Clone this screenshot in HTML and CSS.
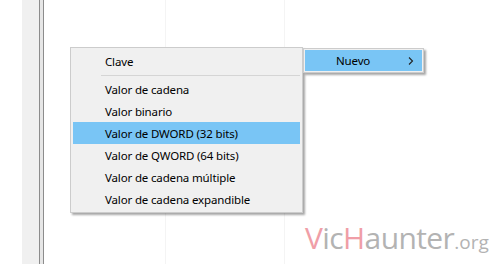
FILE: index.html
```html
<!DOCTYPE html>
<html>
  <head>
    <title>Nuevo valor</title>
    <link rel="stylesheet" href="styles.css">
  </head>
  <body>
    <div class="window">
      <div class="edge"></div>
      <div class="tree"></div>
      <div class="splitter"></div>
      <div class="list">
        <div class="col col-name"></div>
        <div class="col col-type"></div>
        <div class="col col-data"></div>
      </div>

      <div class="menu">
        <div class="item">Clave</div>
        <div class="separator"></div>
        <div class="item">Valor de cadena</div>
        <div class="item">Valor binario</div>
        <div class="item active">Valor de DWORD (32 bits)</div>
        <div class="item">Valor de QWORD (64 bits)</div>
        <div class="item">Valor de cadena múltiple</div>
        <div class="item">Valor de cadena expandible</div>
      </div>

      <div class="menu parent">
        <div class="item active">
          <span>Nuevo</span>
          <svg class="chevron" width="6" height="8" viewBox="0 0 6 8">
            <path d="M1 0.5 L4.5 4 L1 7.5" fill="none" stroke="#222" stroke-width="1.1" />
          </svg>
        </div>
      </div>

      <div class="watermark">
        <span class="pink">V</span>ic<span class="pink">H</span>aunter<span class="tld">.org</span>
      </div>
    </div>
  </body>
</html>
```

FILE: styles.css
```css
body {
  margin: 0;
  font-family: "Noto Sans", "Open Sans", sans-serif;
}
.window {
  position: relative;
  width: 499px;
  height: 264px;
  overflow: hidden;
  display: flex;
  background: #ffffff;
}
.edge {
  width: 22px;
}
.tree {
  width: 17px;
  background: #f0f0f0;
}
.splitter {
  width: 3px;
  background: #e6e6e6;
  border-left: 1px solid #8c8c8c;
  border-right: 1px solid #8c8c8c;
}
.list {
  flex: 1;
  display: flex;
}
.col-name {
  width: 121px;
  border-right: 1px solid #f4f4f4;
}
.col-type {
  width: 118px;
  border-right: 1px solid #f4f4f4;
}
.col-data {
  flex: 1;
}

.menu {
  position: absolute;
  left: 70px;
  top: 47px;
  width: 227px;
  padding: 2px;
  background: #f0f0f0;
  border: 1px solid #cccccc;
  box-shadow: 2px 2px 2px rgba(0, 0, 0, 0.35);
  font-size: 11.5px;
  letter-spacing: -0.15px;
  color: #000000;
}
.item {
  height: 22px;
  line-height: 23px;
  padding-left: 32px;
  white-space: nowrap;
}
.item.active {
  background: #79c5f5;
}
.separator {
  height: 1px;
  margin: 3px 0 2px 28px;
  background: #d5d5d5;
}
.menu.parent {
  left: 303px;
  top: 48px;
  width: 117px;
  padding: 1px;
}
.parent .item {
  height: 21px;
  line-height: 22px;
  display: flex;
  align-items: center;
  justify-content: space-between;
  padding-left: 31px;
  padding-right: 8px;
}
.chevron {
  display: block;
}

.watermark {
  position: absolute;
  left: 305px;
  top: 217px;
  font-family: "Open Sans", sans-serif;
  font-size: 30px;
  color: #b3b3b3;
  letter-spacing: -0.6px;
  white-space: nowrap;
}
.watermark .pink {
  color: #f09ea7;
}
.watermark .tld {
  font-size: 19px;
  letter-spacing: 0;
}
```
